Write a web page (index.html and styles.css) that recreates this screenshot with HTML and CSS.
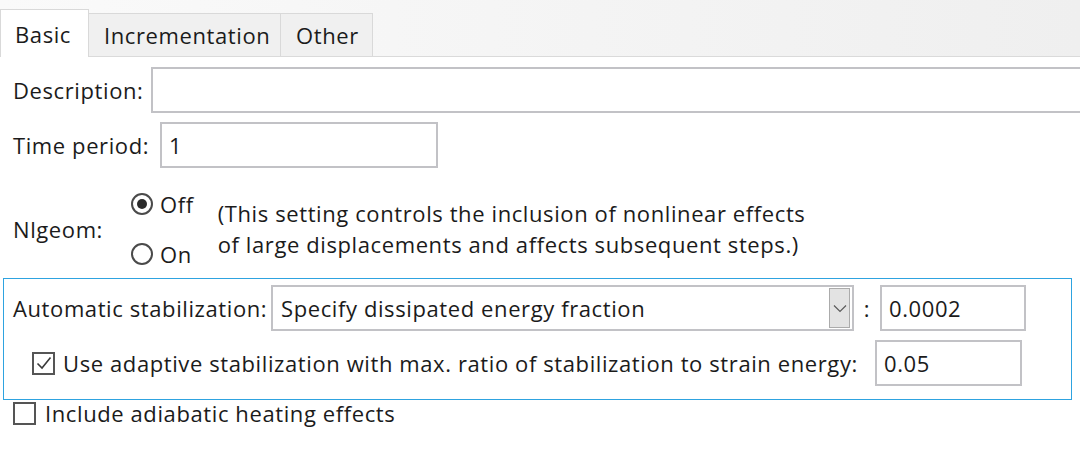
FILE: index.html
```html
<!DOCTYPE html>
<html lang="en">
<head>
    <meta charset="UTF-8">
    <meta name="viewport" content="width=device-width, initial-scale=1.0">
    <title>Step Manager - Basic</title>
    <link rel="stylesheet" href="styles.css">
</head>
<body>
    <div class="tabbar">
        <div class="tab active">Basic</div>
        <div class="tab tab-inc">Incrementation</div>
        <div class="tab tab-other">Other</div>
    </div>

    <div class="panel">
        <div class="row row-desc">
            <label class="lbl">Description:</label>
            <div class="field field-desc"></div>
        </div>

        <div class="row row-time">
            <label class="lbl">Time period:</label>
            <div class="field field-time">1</div>
        </div>

        <div class="nlgeom">
            <div class="lbl nl-label">Nlgeom:</div>
            <div class="radios">
                <div class="radio-row"><span class="radio checked"></span><span>Off</span></div>
                <div class="radio-row"><span class="radio"></span><span>On</span></div>
            </div>
            <div class="note">
                (This setting controls the inclusion of nonlinear effects<br>
                of large displacements and affects subsequent steps.)
            </div>
        </div>

        <div class="stab-box">
            <div class="row row-stab">
                <label class="lbl">Automatic stabilization:</label>
                <div class="select">
                    <span>Specify dissipated energy fraction</span>
                    <span class="drop-btn">
                        <svg width="14" height="9" viewBox="0 0 14 9"><path d="M1 1.5 L7 7.5 L13 1.5" fill="none" stroke="#5a5a5a" stroke-width="1.2"/></svg>
                    </span>
                </div>
                <span class="colon">:</span>
                <div class="field field-frac">0.0002</div>
            </div>
            <div class="row row-adapt">
                <span class="check checked">
                    <svg width="18" height="18" viewBox="0 0 18 18"><path d="M2.5 9.5 L7 14 L15.5 3.5" fill="none" stroke="#3a3a3a" stroke-width="1.6"/></svg>
                </span>
                <span class="adapt-text">Use adaptive stabilization with max. ratio of stabilization to strain energy:</span>
                <div class="field field-ratio">0.05</div>
            </div>
        </div>

        <div class="row row-adiab">
            <span class="check"></span>
            <span>Include adiabatic heating effects</span>
        </div>
    </div>
</body>
</html>
```

FILE: styles.css
```css
body { margin: 0; background: #fff; color: #1b1b1b; font-family: "Open Sans", "Noto Sans", sans-serif; font-size: 22px; letter-spacing: 0.6px; overflow: hidden; }

.tabbar { height: 56px; display: flex; align-items: flex-end; background: linear-gradient(to right, #fafafa, #efefef); border-bottom: 1px solid #dadada; }
.tab { box-sizing: border-box; height: 43px; padding-left: 15px; display: flex; align-items: center; background: #f0f0f0; border: 1px solid #d9d9d9; border-bottom: none; border-left: none; }
.tab.active { width: 89px; height: 48px; background: #fff; border-left: 1px solid #d9d9d9; padding-left: 14px; margin-bottom: -1px; padding-top: 0; }
.tab-inc { width: 192px; }
.tab-other { width: 92px; }

.panel { padding-top: 10px; }
.row { display: flex; align-items: center; }
.lbl { margin-left: 13px; flex: none; }

.field { box-sizing: border-box; height: 46px; border: 2px solid #c2c2c6; background: #fff; display: flex; align-items: center; padding-left: 7px; flex: none; }
.row-desc .lbl { width: 138px; }
.field-desc { flex: 1; margin-right: -20px; }
.row-time { margin-top: 9px; }
.row-time .lbl { width: 147px; }
.field-time { width: 278px; }

.nlgeom { display: flex; align-items: center; margin-top: 23px; height: 76px; }
.nl-label { width: 118px; }
.radios { display: flex; flex-direction: column; gap: 28px; }
.radio-row { display: flex; align-items: center; gap: 7px; height: 22px; }
.radio { box-sizing: border-box; width: 22px; height: 22px; border: 2px solid #4a4a4a; border-radius: 50%; display: flex; align-items: center; justify-content: center; }
.radio.checked::after { content: ""; width: 10px; height: 10px; border-radius: 50%; background: #2b2b2b; }
.note { margin-left: 24px; line-height: 31px; }

.stab-box { margin: 11px 8px 0 3px; border: 1px solid #2ea3e0; padding: 6px 0 13px; }
.row-stab .lbl { margin-left: 9px; width: 258px; }
.select { box-sizing: border-box; width: 583px; height: 46px; border: 2px solid #c2c2c6; display: flex; align-items: center; justify-content: space-between; padding: 0 1px 0 8px; flex: none; }
.drop-btn { box-sizing: border-box; width: 21px; height: 40px; margin-right: 1px; background: #e3e3e3; border: 1px solid #ababab; display: flex; align-items: center; justify-content: center; }
.colon { width: 26px; text-align: center; flex: none; }
.field-frac { width: 146px; }

.row-adapt { margin-top: 9px; }
.check { box-sizing: border-box; width: 23px; height: 23px; border: 2px solid #555; display: inline-flex; align-items: center; justify-content: center; background: #fff; flex: none; }
.row-adapt .check { margin-left: 28px; margin-right: 8px; }
.adapt-text { white-space: nowrap; }
.field-ratio { width: 147px; margin-left: auto; margin-right: 49px; }

.row-adiab { margin-top: -2px; }
.row-adiab .check { margin-left: 13px; margin-right: 9px; }
```
